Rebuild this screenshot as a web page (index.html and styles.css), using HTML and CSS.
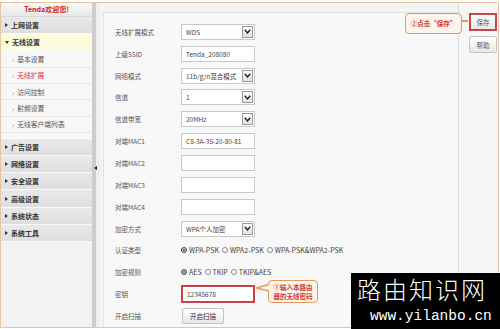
FILE: index.html
```html
<html>
<head>
<title>Tenda 无线扩展</title>
<link rel="stylesheet" href="styles.css">
</head>
<body>
<div class="frame">
  <div class="sidebar">
    <div class="brand">Tenda欢迎您!</div>
    <ul class="menu">
      <li class="item"><i class="caret"></i>上网设置</li>
      <li class="item open"><i class="caret down"></i>无线设置</li>
      <li class="sub">
        <ul>
          <li class="subitem">基本设置</li>
          <li class="subitem active">无线扩展</li>
          <li class="subitem">访问控制</li>
          <li class="subitem">射频设置</li>
          <li class="subitem">无线客户端列表</li>
        </ul>
      </li>
      <li class="item"><i class="caret"></i>广告设置</li>
      <li class="item"><i class="caret"></i>网络设置</li>
      <li class="item"><i class="caret"></i>安全设置</li>
      <li class="item"><i class="caret"></i>高级设置</li>
      <li class="item"><i class="caret"></i>系统状态</li>
      <li class="item"><i class="caret"></i>系统工具</li>
    </ul>
  </div>
  <div class="splitter"><i class="collapse"></i></div>
  <div class="content">
    <div class="panel">
      <div class="row"><span class="label">无线扩展模式</span>
        <div class="field select">WDS<i class="drop"><svg width="7" height="5" viewBox="0 0 7 5"><path d="M0.8 0.8 L3.5 4 L6.2 0.8" fill="none" stroke="#222" stroke-width="1.4"/></svg></i></div></div>
      <div class="row"><span class="label">上级SSID</span><input class="field" value="Tenda_208080"></div>
      <div class="row"><span class="label">网络模式</span>
        <div class="field select">11b/g/n混合模式<i class="drop"><svg width="7" height="5" viewBox="0 0 7 5"><path d="M0.8 0.8 L3.5 4 L6.2 0.8" fill="none" stroke="#222" stroke-width="1.4"/></svg></i></div></div>
      <div class="row"><span class="label">信道</span>
        <div class="field select">1<i class="drop"><svg width="7" height="5" viewBox="0 0 7 5"><path d="M0.8 0.8 L3.5 4 L6.2 0.8" fill="none" stroke="#222" stroke-width="1.4"/></svg></i></div></div>
      <div class="row"><span class="label">信道带宽</span>
        <div class="field select">20MHz<i class="drop"><svg width="7" height="5" viewBox="0 0 7 5"><path d="M0.8 0.8 L3.5 4 L6.2 0.8" fill="none" stroke="#222" stroke-width="1.4"/></svg></i></div></div>
      <div class="row"><span class="label">对端MAC1</span><input class="field" value="C8-3A-35-20-80-81"></div>
      <div class="row"><span class="label">对端MAC2</span><input class="field" value=""></div>
      <div class="row"><span class="label">对端MAC3</span><input class="field" value=""></div>
      <div class="row"><span class="label">对端MAC4</span><input class="field" value=""></div>
      <div class="row"><span class="label">加密方式</span>
        <div class="field select">WPA个人加密<i class="drop"><svg width="7" height="5" viewBox="0 0 7 5"><path d="M0.8 0.8 L3.5 4 L6.2 0.8" fill="none" stroke="#222" stroke-width="1.4"/></svg></i></div></div>
      <div class="row"><span class="label">认证类型</span>
        <div class="radios">
          <i class="radio on"></i><span>WPA-PSK</span>
          <i class="radio"></i><span>WPA2-PSK</span>
          <i class="radio"></i><span>WPA-PSK&amp;WPA2-PSK</span>
        </div></div>
      <div class="row"><span class="label">加密规则</span>
        <div class="radios">
          <i class="radio on"></i><span>AES</span>
          <i class="radio"></i><span>TKIP</span>
          <i class="radio"></i><span>TKIP&amp;AES</span>
        </div></div>
      <div class="row"><span class="label">密钥</span><input class="field key" value="12345678"></div>
      <div class="row"><span class="label">开启扫描</span><button class="btn scan">开启扫描</button></div>
    </div>
  </div>
  <div class="actions">
    <button class="btn save">保存</button>
    <button class="btn">帮助</button>
  </div>
</div>

<div class="tip tip-save">②点击“保存”</div>
<div class="tip tip-key">
  <svg class="tail" width="15" height="10" viewBox="0 0 15 10"><path d="M14 1.5 L1 5 L14 8" fill="#fdf5ec" stroke="#e69a55" stroke-width="1.3"/></svg>
  ①输入本路由<br>器的无线密码
</div>

<div class="watermark">
  <div class="wm-title">路由知识网</div>
  <div class="wm-url">www.yilanbo.cn</div>
</div>
</body>
</html>
```

FILE: styles.css
```css
body { margin: 0;
       background: #fff;
       font-family: "Noto Sans CJK SC", "Noto Sans", sans-serif;
     }
ul { list-style: none; margin: 0; padding: 0; }

.frame {
  position: relative;
  margin-top: 2px;
  width: 499px;
  height: 326px;
  box-sizing: border-box;
  border: 1px solid #e8c4a0;
  display: flex;
  background: #f4f4f4;
  overflow: hidden;
}

/* left menu */
.sidebar { width: 91px; background: #f2f2f2; }
.brand {
  height: 13px;
  line-height: 13px;
  text-align: center;
  font-size: 7px;
  font-weight: bold;
  color: #d0202a;
  background: linear-gradient(#f8f8f8, #e8e8e8);
  border-bottom: 1px solid #d8d8d8;
}
.item {
  height: 16.2px;
  border-bottom: 1px solid #fafafa;
  background: linear-gradient(#e9e9e9, #dedede);
  font-size: 7px;
  font-weight: bold;
  color: #333;
  padding-left: 4px;
  display: flex;
  align-items: center;
  gap: 3px;
}
.item.open { background: #fcfcdc; }
.caret {
  width: 0; height: 0;
  border-left: 3px solid #333;
  border-top: 2.5px solid transparent;
  border-bottom: 2.5px solid transparent;
}
.caret.down {
  border-left: 2.5px solid transparent;
  border-right: 2.5px solid transparent;
  border-top: 3px solid #333;
  border-bottom: 0;
}
.sub { background: #f7f7f7; padding-bottom: 5px; border-bottom: 1px solid #fff; }
.subitem {
  height: 15.3px;
  border-bottom: 1px solid #e8e8e8;
  font-size: 6.8px;
  color: #555;
  padding-left: 11px;
  display: flex;
  align-items: center;
}
.subitem::before { content: "›"; color: #999; margin-right: 3px; font-size: 7px; }
.subitem.active { color: #e0333a; }

.splitter {
  width: 8px;
  background: linear-gradient(to right, #cdcdcd 0 4px, #efefef 4px);
  display: flex;
  align-items: center;
  padding-top: 5px;
  box-sizing: border-box;
}
.collapse {
  margin-left: 2px;
  width: 0; height: 0;
  border-right: 3px solid #222;
  border-top: 2.5px solid transparent;
  border-bottom: 2.5px solid transparent;
}

/* form */
.content { flex: 1; padding: 9px 0 0 3px; background: #f4f4f4; }
.panel {
  height: 100%;
  box-sizing: border-box;
  border-top: 1px solid #e3e3e3;
  border-left: 1px solid #e3e3e3;
  background: #f8f8f8;
  padding: 8px 0 0 11px;
}
.row { height: 21.85px; display: flex; align-items: center; }
.label { width: 66px; font-size: 6.5px; color: #555; }
.field {
  width: 74px;
  height: 16px;
  box-sizing: border-box;
  margin: 0;
  border: 1px solid #c9c9c9;
  background: #fff;
  font-family: inherit;
  font-size: 6.5px;
  color: #444;
  padding: 0 0 0 4px;
  display: flex;
  align-items: center;
  outline: none;
}
.drop {
  margin-left: auto;
  margin-right: 1px;
  width: 11px;
  height: 12px;
  box-sizing: border-box;
  border: 1px solid #9a9a9a;
  background: linear-gradient(#fff, #e2e2e2);
  display: flex;
  align-items: center;
  justify-content: center;
}
.field.key { height: 18px; border: 2px solid #c9414a; }
.radios { display: flex; align-items: center; font-size: 7px; color: #444; }
.radios span { margin-right: 3px; }
.radio {
  width: 6px; height: 6px;
  box-sizing: border-box;
  border-radius: 50%;
  border: 1px solid #888;
  background: #fff;
  margin-right: 2px;
}
.radio.on { border-color: #555; background: #333; box-shadow: inset 0 0 0 1px #fff; }

.btn {
  font-family: inherit;
  font-size: 6.5px;
  color: #555;
  background: linear-gradient(#fff, #e7e7e7);
  border: 1px solid #c4c4c4;
  border-radius: 2px;
  padding: 0;
  box-sizing: border-box;
}
.scan { width: 42px; height: 16px; margin-left: 1px; color: #333; }

.actions {
  width: 40px;
  box-sizing: border-box;
  border-left: 1px solid #dcdcdc;
  background: #f6f6f6;
  padding: 10px 0 0 10px;
  display: flex;
  flex-direction: column;
  gap: 5px;
}
.actions .btn { width: 28px; height: 17px; }
.actions .save { height: 18px; border: 2px solid #c8464a; border-radius: 0; }

/* annotations */
.tip {
  position: absolute;
  box-sizing: border-box;
  border: 1.5px solid #e69a55;
  border-radius: 4px;
  background: #fdf5ec;
  color: #d23c3c;
  font-size: 6.5px;
  font-weight: bold;
  line-height: 9px;
  display: flex;
  align-items: center;
  justify-content: center;
  text-align: center;
}
.tip-save { left: 405px; top: 13px; width: 57px; height: 21px; }
.tip-save::after {
  content: "";
  position: absolute;
  left: 100%;
  top: 6px;
  width: 7px;
  height: 1.5px;
  background: #e69a55;
}
.tip-key { left: 268px; top: 280px; width: 50px; height: 23px; }
.tail { position: absolute; left: -14px; top: 2px; }

.watermark {
  position: absolute;
  left: 351px;
  top: 273px;
  width: 149px;
  height: 56px;
  background: #000;
  color: #fff;
}
.wm-title { font-size: 24px; line-height: 28px; padding: 2px 0 0 6px; letter-spacing: 2px; font-weight: 300; }
.wm-url { font-family: "Liberation Mono", monospace; font-size: 14.5px; line-height: 14px; padding: 6px 0 0 19px; }
```
